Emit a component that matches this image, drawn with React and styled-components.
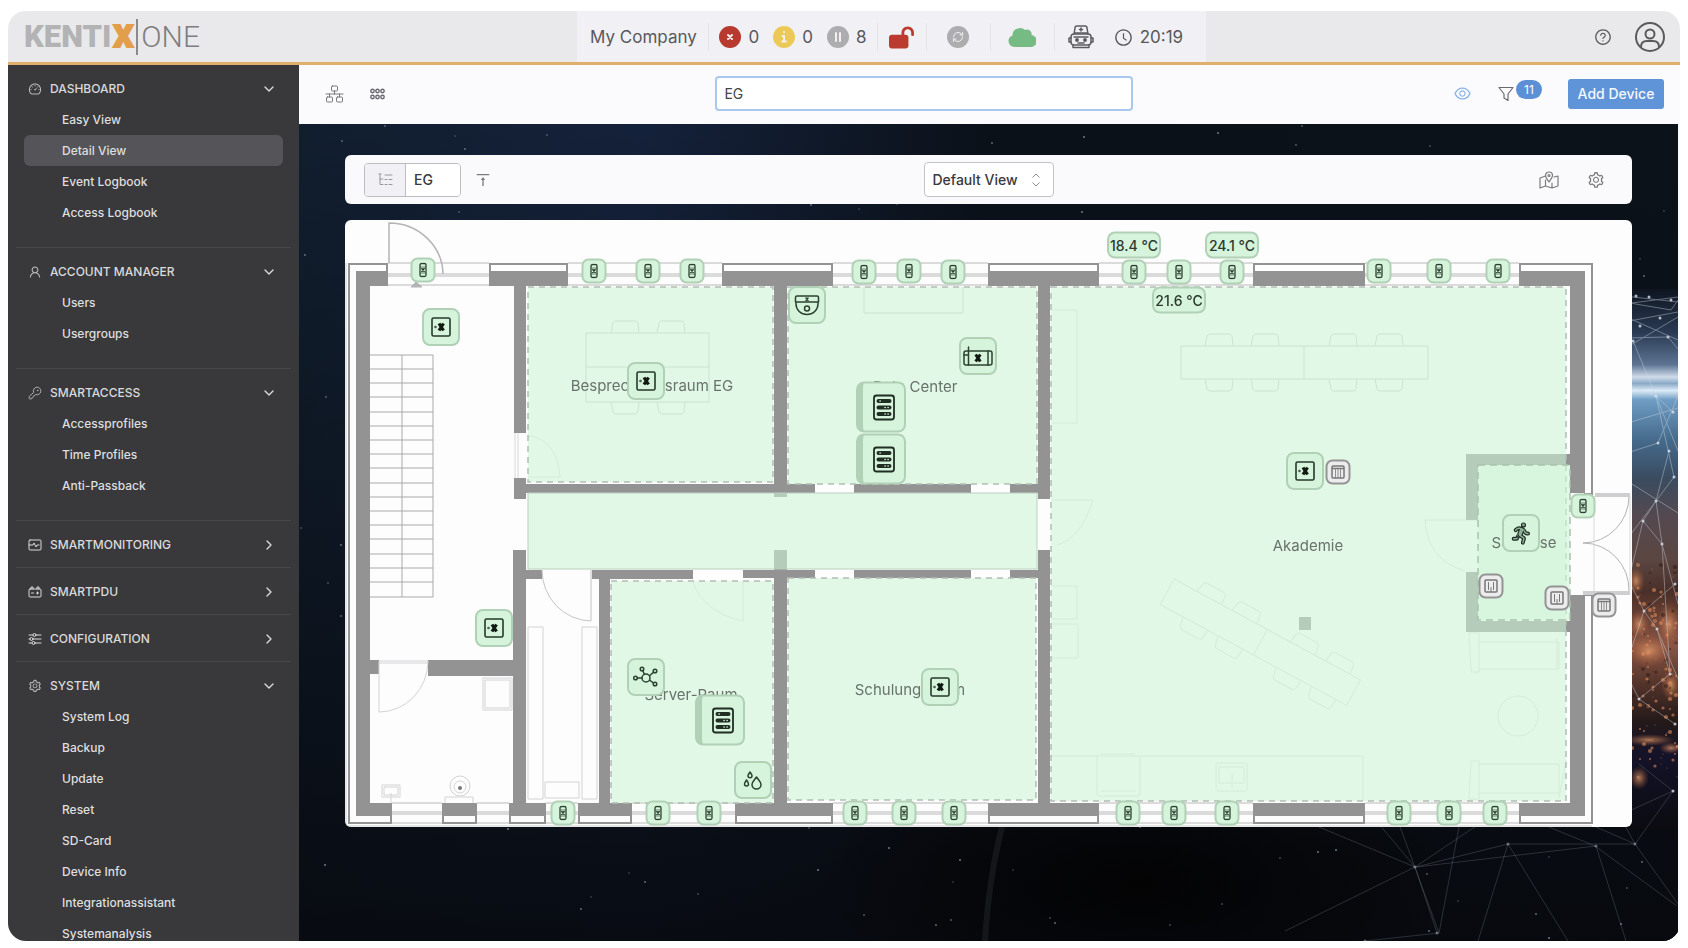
import { useState } from "react";
import styled, { createGlobalStyle } from "styled-components";
import {
   AiOutlineClockCircle,
   AiOutlineDashboard,
   AiOutlineEye,
   AiOutlineQuestionCircle,
   AiOutlineSetting,
   AiOutlineUser,
   AiOutlineVerticalAlignTop,
} from "react-icons/ai";
import { FaLockOpen, FaPersonRunning } from "react-icons/fa6";
import { ChevronDown, ChevronRight, KeyRound, RefreshCw } from "lucide-react";

const planWidth = 1287;
const planHeight = 607;
const wall = "#939393";

const GlobalStyle = createGlobalStyle`
   *{ box-sizing: border-box; }
   body{
      margin:           0;
      background:       #ffffff;
      font-family:      Inter, "Liberation Sans", sans-serif;
   }
   button, input, select{ font-family: inherit; }
`

const Window = styled.div`
   display:          flex;
   flex-direction:   column;
   height:           calc(100vh - 18px);
   margin:           11px 8px 7px;
   border-radius:    18px;
   overflow:         hidden;
   background:       #fbfbfd;
`

/* ---------- header ---------- */

const Header = styled.header`
   display:          grid;
   grid-template-columns: 6fr auto 5fr;
   flex:             none;
   height:           54px;
   background:       #e9e9eb;
   border-bottom:    3px solid #e0b06a;
`
const Logo = styled.a`
   display:          flex;
   align-items:      center;
   align-self:       center;
   height:           36px;
   padding-left:     16px;
   font-family:      Roboto, "Liberation Sans", sans-serif;
   font-size:        31px;
   font-weight:      900;
   line-height:      36px;
   color:            #b3b3b4;
   text-decoration:  none;
`
const LogoX = styled.span`
   margin-left:      2px;
   color:            #e39e4c;
   -webkit-text-stroke: 2px #e39e4c;
`
const LogoOne = styled.span`
   margin-left:      3px;
   padding-left:     3px;
   border-left:      2px solid #8a8a8b;
   font-size:        30px;
   font-weight:      300;
   color:            #7e7e80;
`
const StatusBar = styled.div`
   display:          flex;
   align-items:      center;
   height:           51px;
   padding:          1px 10px 0 2px;
   background:       #f0f0f5;
   color:            #58585b;
   font-size:        17px;
`
const StatusGroup = styled.div`
   display:          flex;
   align-items:      center;
   justify-content:  center;
   gap:              ${({ $gap }) => $gap || 12}px;
   width:            ${({ $width }) => $width}px;
   height:           28px;
   border-right:     ${({ $last }) => ($last ? "none" : "1px solid #e2e2e8")};
`
const Counter = styled.span`
   display:          flex;
   align-items:      center;
   gap:              7px;
`
const HeaderActions = styled.div`
   display:          flex;
   align-items:      center;
   justify-content:  flex-end;
   gap:              22px;
   padding-right:    14px;
`
const IconButton = styled.button`
   display:          flex;
   align-items:      center;
   justify-content:  center;
   padding:          0;
   border:           none;
   background:       none;
   color:            ${({ $color }) => $color || "#7b7b7e"};
   cursor:           pointer;
`

/* ---------- sidebar ---------- */

const Body = styled.div`
   display:          flex;
   flex:             1;
   min-height:       0;
`
const Sidebar = styled.nav`
   flex:             none;
   width:            291px;
   overflow:         hidden;
   background:       #39393b;
`
const Section = styled.section`
   padding:          8px 0 ${({ $open }) => ($open ? 19 : 7)}px;
   margin:           0 8px;

   & + &{ border-top: 1px solid #48484b; }
`
const SectionHead = styled.button`
   display:          flex;
   align-items:      center;
   width:            100%;
   height:           31px;
   padding:          0 14px 0 12px;
   border:           none;
   background:       none;
   color:            #dadadb;
   font-size:        12px;
   font-weight:      500;
   cursor:           pointer;
`
const SectionTitle = styled.span`
   flex:             1;
   margin-left:      8px;
   text-align:       left;
`
const NavLink = styled.a`
   display:          block;
   height:           31px;
   margin:           0 8px;
   padding-left:     38px;
   border-radius:    6px;
   background:       ${({ $active }) => ($active ? "#555559" : "none")};
   color:            #dededf;
   font-size:        12px;
   font-weight:      500;
   line-height:      31px;
   text-decoration:  none;
`

/* ---------- main area ---------- */

const Main = styled.main`
   display:          flex;
   flex-direction:   column;
   flex:             1;
   min-width:        0;
`
const Toolbar = styled.div`
   display:          grid;
   grid-template-columns: 13fr 418px 17fr;
   align-items:      center;
   flex:             none;
   height:           59px;
   padding:          0 2px 2px 0;
   background:       #fbfbfe;
`
const ToolGroup = styled.div`
   display:          flex;
   align-items:      center;
   gap:              26px;
   padding-left:     26px;
`
const ToolActions = styled.div`
   display:          flex;
   align-items:      center;
   justify-content:  flex-end;
   padding-right:    14px;
`
const Search = styled.input`
   width:            100%;
   height:           35px;
   padding:          0 7px;
   border:           2px solid #a9c8ee;
   border-radius:    4px;
   outline:          none;
   background:       #ffffff;
   color:            #454548;
   font-size:        14px;
`
const FilterButton = styled(IconButton)`
   position:         relative;
   margin:           0 54px 0 26px;
`
const Badge = styled.span`
   position:         absolute;
   left:             18px;
   top:              -6px;
   width:            26px;
   border-radius:    10px;
   background:       #5b8fd6;
   color:            #ffffff;
   font-size:        12px;
   line-height:      19px;
`
const AddButton = styled.button`
   width:            96px;
   height:           30px;
   padding:          0;
   border:           none;
   border-radius:    3px;
   background:       #6094d8;
   color:            #f4f8fd;
   font-size:        14px;
   font-weight:      500;
   cursor:           pointer;
`
const Stage = styled.div`
   position:         relative;
   flex:             1;
   min-height:       0;
   margin-right:     2px;
   padding:          31px 46px;
   overflow:         hidden;
   background:       #0b1017;
`
const Sky = styled.svg`
   position:         absolute;
   inset:            0;
   width:            100%;
   height:           100%;
`
const PlanBar = styled.div`
   position:         relative;
   display:          grid;
   grid-template-columns: 1fr auto 1fr;
   align-items:      center;
   height:           49px;
   margin-bottom:    16px;
   padding:          0 19px;
   border-radius:    6px;
   background:       #fafafd;
`
const Crumb = styled.div`
   display:          flex;
   align-items:      center;
   gap:              13px;
`
const CrumbField = styled.div`
   display:          flex;
   width:            97px;
   height:           34px;
   border:           1px solid #bdbdc1;
   border-radius:    4px;
   overflow:         hidden;
   background:       #ffffff;
`
const CrumbIcon = styled.span`
   display:          flex;
   align-items:      center;
   justify-content:  center;
   flex:             none;
   width:            41px;
   border-right:     1px solid #bdbdc1;
   background:       #f1f1f5;
`
const CrumbInput = styled.input`
   width:            100%;
   min-width:        0;
   padding:          0 8px;
   border:           none;
   outline:          none;
   color:            #39393b;
   font-size:        14px;
   font-weight:      500;
`
const ViewField = styled.div`
   display:          flex;
   align-items:      center;
   position:         relative;
`
const ViewSelect = styled.select`
   width:            130px;
   height:           35px;
   padding:          0 8px;
   border:           1px solid #c3c3c7;
   border-radius:    4px;
   outline:          none;
   appearance:       none;
   background:       #ffffff;
   color:            #39393b;
   font-size:        14px;
   font-weight:      500;
`
const SelectArrows = styled.svg`
   position:         absolute;
   right:            13px;
   pointer-events:   none;
`
const PlanActions = styled.div`
   display:          flex;
   align-items:      center;
   justify-content:  flex-end;
   gap:              28px;
   padding-right:    8px;
`
const Plan = styled.div`
   position:         relative;
   border-radius:    6px;
   overflow:         hidden;
   background:       #fdfdfd;
`
const Drawing = styled.svg`
   display:          block;
   width:            100%;
   height:           auto;
`
const Pinned = styled.div`
   position:         absolute;
   left:             calc(${({ $x }) => $x} / ${planWidth} * 100%);
   top:              calc(${({ $y }) => $y} / ${planHeight} * 100%);
   transform:        translate(-50%, -50%);
`
const RoomName = styled(Pinned)`
   color:            #68726b;
   font-size:        15px;
   white-space:      nowrap;
`
const Device = styled(Pinned)`
   display:          flex;
   align-items:      center;
   justify-content:  center;
   width:            ${({ $w }) => $w}px;
   height:           ${({ $h }) => $h}px;
   padding:          0;
   border:           2px solid ${({ $idle }) => ($idle ? "#949496" : "#b0d1b6")};
   border-left-width: ${({ $rack }) => ($rack ? 7 : 2)}px;
   border-radius:    ${({ $w }) => ($w === 25 ? 7 : 8)}px;
   background:       ${({ $idle }) => ($idle ? "#ececed" : "#d6f3db")};
   color:            #2c3a30;
   font-size:        14px;
   font-weight:      500;
   white-space:      nowrap;
   cursor:           pointer;
`
const Runner = styled(FaPersonRunning)`
   fill:             #8fae96;
   stroke:           #1f2d23;
   stroke-width:     30;
   overflow:         visible;
`

/* ---------- icons ---------- */

const Stroke = ({ w, h = w, view, width = 1, color = "currentColor", children }) => (
   <svg width={w} height={h} viewBox={view || `0 0 ${w} ${h}`} fill="none" stroke={color}
      strokeWidth={width} strokeLinecap="round" strokeLinejoin="round" aria-hidden="true">
      {children}
   </svg>
);

const DeviceIcon = ({ kind }) => {
   if (kind === "contact") return (
      <Stroke w={11} h={15} width={1.3} color="#2b4231">
         <rect x="2.500" y="1" width="6" height="13" rx="1.500" />
         <path d="M3 4.500h5M3 10.500h5" strokeWidth=".6" />
         <path d="M4.300 6l2.400 3M6.700 6l-2.400 3" strokeWidth="1.500" />
      </Stroke>
   );
   if (kind === "sensor") return (
      <Stroke w={22} width={1.6} color="#26382b">
         <rect x="2" y="2" width="18" height="18" rx="1.500" />
         <path d="M9 7.500l4.500 7M13.500 7.500l-4.500 7" strokeWidth="3.200" strokeLinecap="butt" stroke="#101a13" />
         <circle cx="5.500" cy="11" r=".4" />
      </Stroke>
   );
   if (kind === "dome") return (
      <Stroke w={26} width={1.5} color="#2b4231">
         <path d="M1.500 5.500q0-1.500 1.500-1.500h20q1.500 0 1.500 1.500v4.500h-23zM2 10v2a11 10.500 0 0 0 22 0v-2" />
         <circle cx="13" cy="16.500" r="2.500" />
         <path d="M12 6l2 2.500M14 6l-2 2.500" />
      </Stroke>
   );
   if (kind === "gateway") return (
      <Stroke w={30} h={22} width={1.5} color="#2b4231">
         <rect x="1" y="6" width="28" height="14" rx="2" />
         <path d="M5.500 2v18M25 6v14M1 10h4" />
         <path d="M12.700 9.500l4.600 7M17.300 9.500l-4.600 7" strokeWidth="3" strokeLinecap="butt" stroke="#101a13" />
      </Stroke>
   );
   if (kind === "rack") return (
      <Stroke w={24} h={28} width={1.8} color="#1f2d23">
         <rect x="2" y="2" width="20" height="24" rx="2.500" />
         <path d="M6.500 7.500h11M6.500 14h11M6.500 20.500h11" strokeWidth="4" />
         <path d="M8 7.500h.2M13 14h.2M16 14h.2M13 20.500h.2M16 20.500h.2" stroke="#d6f3db" strokeWidth="1.500" />
      </Stroke>
   );
   if (kind === "network") return (
      <Stroke w={26} h={22} width={1.5} color="#2b4231">
         <circle cx="13" cy="12" r="4" />
         <circle cx="2.500" cy="12" r="1.800" />
         <circle cx="9" cy="3" r="1.800" />
         <circle cx="22" cy="5" r="1.800" />
         <circle cx="22" cy="18" r="1.800" />
         <path d="M4.300 12h4.700M9.800 4.700l1.600 3.600M16.500 9.800l4-3.600M16.500 14.200l4 2.800" />
      </Stroke>
   );
   if (kind === "water") return (
      <Stroke w={20} h={20} width={1.5} color="#2b4231">
         <path d="M13.500 7c2 3 4.500 5 4.500 7.500a4.500 4.500 0 0 1-9 0c0-2.500 2.500-4.500 4.500-7.500z" />
         <path d="M7 2c1 1.500 2 2.500 2 3.800a2 2 0 0 1-4 0c0-1.300 1-2.300 2-3.800zM3.500 10c1 1.500 2 2.700 2 4a2 2 0 0 1-4 0c0-1.300 1-2.500 2-4z" />
      </Stroke>
   );
   if (kind === "door") return (
      <Stroke w={15} width={1.5} color="#77777a">
         <rect x="1.500" y="1.500" width="12" height="12" rx="1" />
         <path d="M5 4v7M10 4v7M7.500 9v4" strokeWidth="1" />
      </Stroke>
   );
   if (kind === "slats") return (
      <Stroke w={15} width={1.5} color="#77777a">
         <rect x="1.500" y="1.500" width="12" height="12" rx="1" />
         <path d="M2 4h11" />
         <path d="M5 5v8M7.500 5v8M10 5v8" strokeWidth=".8" />
      </Stroke>
   );
   return <Runner size={21} />;
};

const MonitorIcon = () => (
   <Stroke w={14} h={12}>
      <rect x="1" y="1" width="12" height="10" rx="1" />
      <path d="M1 6h4l1-2 2 4 1-2h2" />
   </Stroke>
);
const PduIcon = () => (
   <Stroke w={14} h={12}>
      <rect x="1" y="3" width="12" height="8" rx="1" />
      <path d="M3 3V1h2v2M9 3V1h2v2M3.500 7h2M8.500 7h2M9.500 6v2" />
   </Stroke>
);
const SlidersIcon = () => (
   <Stroke w={14} h={14}>
      <path d="M1 3h4M8 3h5M1 7h1M5 7h8M1 11h3M7 11h6" />
      <circle cx="6.500" cy="3" r="1.500" />
      <circle cx="3.500" cy="7" r="1.500" />
      <circle cx="5.500" cy="11" r="1.500" />
   </Stroke>
);

/* ---------- data ---------- */

const sections = [
   { title: "DASHBOARD", Icon: AiOutlineDashboard, items: ["Easy View", "Detail View", "Event Logbook", "Access Logbook"] },
   { title: "ACCOUNT MANAGER", Icon: AiOutlineUser, items: ["Users", "Usergroups"] },
   { title: "SMARTACCESS", Icon: KeyRound, items: ["Accessprofiles", "Time Profiles", "Anti-Passback"] },
   { title: "SMARTMONITORING", Icon: MonitorIcon, items: [] },
   { title: "SMARTPDU", Icon: PduIcon, items: [] },
   { title: "CONFIGURATION", Icon: SlidersIcon, items: [] },
   {
      title: "SYSTEM", Icon: AiOutlineSetting,
      items: ["System Log", "Backup", "Update", "Reset", "SD-Card", "Device Info", "Integrationassistant", "Systemanalysis"],
   },
];

const roomNames = [
   ["Besprechungsraum EG", 307, 165],
   ["Data Center", 570, 166],
   ["Akademie", 963, 325],
   ["Schleuse", 1179, 322],
   ["Server-Raum", 346, 474],
   ["Schulungsraum", 565, 469],
];

const contacts = [
   [78, 50], [249, 51], [303, 51], [347, 51], [519, 52], [564, 51], [608, 52],
   [789, 52], [834, 52], [887, 52], [1034, 51], [1094, 51], [1153, 51], [1238, 286],
   [218, 593], [313, 593], [364, 593], [510, 593], [559, 593], [609, 593],
   [783, 593], [829, 593], [882, 593], [1054, 593], [1104, 593], [1150, 593],
];

const devices = [
   ["sensor", 96, 107], ["sensor", 301, 161], ["dome", 462, 85], ["gateway", 633, 136],
   ["sensor", 960, 251], ["runner", 1176, 313], ["sensor", 149, 408], ["network", 301, 457],
   ["water", 408, 560], ["sensor", 595, 467],
];

const racks = [[536, 187], [536, 239], [375, 500]];

const idleDoors = [["slats", 993, 252], ["door", 1146, 366], ["door", 1212, 378], ["slats", 1259, 385]];

const temperatures = [["18.4 °C", 789, 25], ["24.1 °C", 887, 25], ["21.6 °C", 834, 80]];

// x ranges of the outer wall between windows
const topWall = [[144, 223], [377, 488], [643, 754], [908, 1020]];
const bottomWall = [[97, 132], [164, 201], [233, 287], [390, 488], [643, 754], [908, 1020]];
const topWindows = [[43, 144], [223, 377], [488, 643], [754, 908], [1020, 1174]];
const bottomWindows = [[47, 97], [132, 164], [201, 233], [287, 390], [488, 643], [754, 908], [1020, 1174]];

// x, y, width, height
const innerWalls = [
   [169, 66, 12, 147], [169, 258, 12, 21], [168, 330, 13, 253],
   [181, 264, 289, 9], [509, 264, 117, 9], [665, 264, 28, 9],
   [429, 66, 13, 211], [693, 66, 12, 213], [693, 330, 12, 253],
   [181, 350, 16, 9], [247, 350, 101, 9], [398, 350, 72, 8], [509, 350, 117, 8], [665, 350, 28, 8],
   [254, 350, 11, 233], [429, 330, 13, 253],
   [25, 440, 9, 14], [83, 440, 85, 16],
   [1121, 234, 104, 11], [1121, 245, 12, 55], [1121, 352, 12, 49], [1121, 401, 104, 11],
   [954, 397, 12, 13],
];

const rooms = [
   [183, 67, 245, 195], [443, 67, 249, 197], [706, 67, 515, 514], [266, 361, 162, 222], [443, 358, 248, 222],
];

const Chairs = ({ xs, top, bottom }) => xs.map((x) => (
   <g key={x}>
      <path d={`M${x} ${top}l2-10q1-2 3-2h19q2 0 3 2l1 10`} />
      <path d={`M${x} ${bottom}l2 10q1 2 3 2h19q2 0 3-2l1-10`} />
   </g>
));

const stars = Array.from({ length: 230 }, (_, i) => ({
   x: (i * 311 + ((i * i * 17) % 97)) % 1379,
   y: (i * 197 + ((i * i * 29) % 113)) % 817,
   o: 0.25 + (i % 5) * 0.1,
}));

const cityLights = Array.from({ length: 150 }, (_, i) => ({
   x: 1333 + ((i * 31 + ((i * i * 7) % 23)) % 46),
   y: 440 + ((i * 47 + ((i * i * 13) % 61)) % 215),
   r: 0.6 + (i % 4) * 0.5,
}));

const meshPoints = [
   [1337, 172], [1350, 173], [1372, 176], [1341, 202], [1361, 194], [1369, 213], [1334, 217], [1357, 272],
   [1374, 288], [1359, 319], [1370, 327], [1375, 353], [1357, 377], [1344, 397], [1363, 420], [1376, 460],
   [1345, 487], [1358, 505], [1371, 550], [1340, 575], [1376, 600], [1374, 667], [1336, 720], [1297, 722],
   [1209, 720], [1116, 743], [1138, 809], [1066, 817],
];

const Background = () => (
   <Sky viewBox="0 0 1379 817" preserveAspectRatio="xMaxYMin slice" aria-hidden="true">
      <defs>
         <linearGradient id="night" x1="0" y1="0" x2="1" y2="0">
            <stop offset="0" stopColor="#111e2e" />
            <stop offset=".25" stopColor="#14213a" />
            <stop offset=".5" stopColor="#0b1119" />
            <stop offset="1" stopColor="#0c121a" />
         </linearGradient>
         <linearGradient id="fade" x1="0" y1="0" x2="0" y2="1">
            <stop offset="0" stopColor="#080d14" stopOpacity="0" />
            <stop offset="1" stopColor="#07090e" stopOpacity=".9" />
         </linearGradient>
         <linearGradient id="earth" x1="0" y1="0" x2="0" y2="1">
            <stop offset="0" stopColor="#0e1520" />
            <stop offset=".08" stopColor="#2a3a52" />
            <stop offset=".14" stopColor="#5c7492" />
            <stop offset=".163" stopColor="#d0dcea" />
            <stop offset=".175" stopColor="#8ba9c6" />
            <stop offset=".188" stopColor="#dcebf7" />
            <stop offset=".205" stopColor="#6f9dc4" />
            <stop offset=".28" stopColor="#456a8b" />
            <stop offset=".35" stopColor="#3a4c60" />
            <stop offset=".42" stopColor="#54494f" />
            <stop offset=".5" stopColor="#5b4642" />
            <stop offset=".56" stopColor="#4a2f28" />
            <stop offset=".66" stopColor="#8a5544" />
            <stop offset=".74" stopColor="#4d3028" />
            <stop offset=".8" stopColor="#241a1a" />
            <stop offset=".86" stopColor="#14132a" />
            <stop offset="1" stopColor="#0b0b10" />
         </linearGradient>
         <radialGradient id="city">
            <stop offset="0" stopColor="#f2a873" stopOpacity=".7" />
            <stop offset="1" stopColor="#b45f38" stopOpacity="0" />
         </radialGradient>
         <radialGradient id="shade">
            <stop offset="0" stopColor="#030304" />
            <stop offset="1" stopColor="#030304" stopOpacity="0" />
         </radialGradient>
      </defs>
      <rect width="1379" height="817" fill="url(#night)" />
      <rect width="1379" height="817" fill="url(#fade)" />
      <ellipse cx="840" cy="760" rx="320" ry="130" fill="url(#shade)" />
      {stars.map(({ x, y, o }, i) => <circle key={i} cx={x} cy={y} r="1" fill="#9fb6d0" opacity={o} />)}
      <rect x="1325" y="165" width="54" height="540" fill="url(#earth)" />
      {[[1337, 457, 9, 14], [1350, 527, 22, 16], [1370, 500, 12, 22], [1340, 500, 10, 14], [1372, 561, 10, 16], [1350, 616, 26, 6], [1372, 624, 12, 6], [1340, 654, 10, 12]].map(([x, y, rx, ry]) => (
         <ellipse key={y + x} cx={x} cy={y} rx={rx} ry={ry} fill="url(#city)" />
      ))}
      {cityLights.map(({ x, y, r }, i) => (
         <circle key={i} cx={x} cy={y} r={r} fill={i % 3 ? "#e08c5c" : "#2a1512"} opacity={i % 3 ? 0.6 : 0.5} />
      ))}
      <path d="M703 703q-13 50-17 114" stroke="#1d2127" strokeWidth="6" fill="none" opacity=".6" />
      <g stroke="#cfdbe8" strokeWidth="1" opacity=".42" fill="none">
         <path d="M1325 172l54 6M1325 180l54-7M1325 198l54-10M1325 192l54 24M1325 225l54-32M1325 214l44-1 10 12M1325 178l47 8 7-10" />
         <path d="M1325 260l32 12 22 55M1325 300l54-16M1325 330l34-11 20-47M1325 355l54 34M1370 327l-13 50-32 42M1357 272l18 81-18 24M1334 217l23 55 17 16" />
         <path d="M1357 377l-13 20-19 78M1357 377l6 43 16 60M1344 397l19 23 8 130M1345 487l-20-40M1345 487l13 18 21 50M1345 487l31-27M1345 487l-20 60M1358 505l13 45-31 25-15-30M1340 575l36 25" />
      </g>
      <g stroke="#8a93a0" strokeWidth="1" opacity=".28" fill="none">
         <path d="M1340 640l34 27-38 53M1374 667l-79 36M1336 720l-11-20M1336 720l-39-17M1297 722l-180 21M1209 720l-92 23M1209 720l127 0M1080 700l36 43-130 64M1020 703l96 40M1100 700l40 109-74 8M1138 809l-22-66M1180 700l-64 43M1160 703l-20 106M1336 720l43 60M1209 720l-30 97M1209 720l60 97M1297 722l30 95M1250 703l46 19 82 60" />
      </g>
      {meshPoints.map(([x, y], i) => <circle key={i} cx={x} cy={y} r="1.500" fill="#dbe4ee" opacity={y > 700 ? 0.4 : 0.8} />)}
   </Sky>
);

const FloorPlan = () => (
   <Drawing viewBox={`0 0 ${planWidth} ${planHeight}`} role="img" aria-label="Floor plan EG">
      {/* outer shell */}
      <g fill="none" stroke="#b9b9bb">
         {topWindows.map(([a, b]) => (
            <path key={a} d={`M${a} 43H${b}M${a} 54H${b}M${a} 56H${b}M${a} 65H${b}`} strokeWidth="1" />
         ))}
         {bottomWindows.map(([a, b]) => (
            <path key={a} d={`M${a} 583H${b}M${a} 592H${b}M${a} 594H${b}M${a} 603H${b}`} strokeWidth="1" />
         ))}
         <path d="M1 43V604q0 2 2 2H1247" stroke="#cfcfd1" />
      </g>
      <g fill={wall}>
         <path d="M11 51H43V66H25V583H47V596H11z" />
         <path d="M1174 51H1240V273H1225V66H1174z" />
         <path d="M1225 375H1240V596H1174V583H1225z" />
         {topWall.map(([a, b]) => <rect key={a} x={a} y="51" width={b - a} height="15" />)}
         {bottomWall.map(([a, b]) => <rect key={a} x={a} y="583" width={b - a} height="13" />)}
         {innerWalls.map(([x, y, w, h]) => <rect key={`${x}-${y}`} x={x} y={y} width={w} height={h} />)}
      </g>
      <g fill="none" stroke={wall} strokeWidth="2">
         <path d="M42 52V44H4V603H46V595" />
         <path d="M1175 52V44H1247V274H1239M1239 375H1247V603H1175V595" />
         {topWall.map(([a, b]) => <path key={a} d={`M${a + 1} 52V44H${b - 1}V52`} />)}
         {bottomWall.map(([a, b]) => <path key={a} d={`M${a + 1} 595V603H${b - 1}V595`} />)}
      </g>

      {/* doors and fixtures */}
      <g fill="none" stroke="#b4b4b6">
         <path d="M44 43V3A54 52 0 0 1 98 54" strokeWidth="1.500" />
         <path d="M66 67l5-5 6 5z" fill="#b4b4b6" />
         <path d="M1284 276A46 47 0 0 1 1238 323A46 47 0 0 1 1284 371" />
         <path d="M1285 276V371M1249 276V372" stroke="#d8d8da" />
         <path d="M1250 275H1285M1238 373H1285" stroke="#cfcfd1" strokeWidth="4" />
         <path d="M170 213V258M173 213V258" stroke="#d8d8da" />
      </g>
      <g fill="none" stroke="#a9a9ab">
         <path d="M25 135H88V377H25M57 135V377" />
         {Array.from({ length: 16 }, (_, i) => (
            <path key={i} d={`M25 ${Math.round(149 + i * 14.2)}H88`} />
         ))}
      </g>
      <g fill="none" stroke="#d3d3d6">
         <path d="M34 441H83A49 51 0 0 1 34 492V441M34 443H83" />
         <path d="M138 458H167V490H138zM140 460H165V488H140z" />
         <path d="M37 565H55V577H37zM39 567H53V575H39zM46 573V583" />
         <circle cx="115" cy="566" r="10" />
         <circle cx="115" cy="567" r="6" />
         <circle cx="115" cy="568" r="2" fill="#77777a" stroke="none" />
         <path d="M100 583V577H128V583" />
         <path d="M197 350A50 51 0 0 0 246 401V350" stroke="#c4c4c7" />
         <path d="M183 407H198V579H183zM237 407H252V579H237zM200 562H234V578H200z" />
      </g>

      {/* furniture below the tinted rooms */}
      <g fill="none" stroke="#a6a6a9" strokeWidth="1" opacity=".6">
         <path d="M241 113H364V182H241zM241 147H364M519 67V93H618V67" />
         <path d="M183 216A32 42 0 0 1 215 257H183" opacity=".6" />
         <Chairs xs={[266, 312]} top={113} bottom={182} />
         <path d="M836 126H1083V159H836zM959 126V159" />
         <Chairs xs={[860, 906, 984, 1030]} top={126} bottom={159} />
         <g opacity=".6">
            <path d="M707 90H732V203H707M707 280H748Q736 318 712 325M707 366H732V399H707M707 404H733V438H707" />
            <path d="M348 362Q358 392 398 401V362" />
            <path d="M1133 300H1080Q1082 340 1120 351" />
            <path d="M706 536H1018V581M752 536V574q0 2 2 2H793q2 0 2-2V536M756 534H790M756 571H791" />
            <rect x="871" y="543" width="31" height="28" rx="2" />
            <rect x="874" y="547" width="25" height="16" />
            <path d="M887 553V568" />
            <path d="M1124 413H1134V452H1126zM1134 422H1214V449H1134M1212 418V449M1126 541H1134V579H1124zM1134 544H1214V573H1134M1221 540L1214 578" />
            <circle cx="1173" cy="496" r="20" />
            <g transform="translate(829 359) rotate(28.400)">
               <path d="M0 0H212V29H0zM106 0V29" />
               <Chairs xs={[26, 66, 132, 172]} top={0} bottom={29} />
            </g>
         </g>
      </g>

      {/* monitored rooms */}
      <g fill="#cff4d6" fillOpacity=".58">
         <rect x="183" y="273" width="509" height="76" stroke="#b9cfbd" />
         {rooms.map(([x, y, w, h]) => (
            <rect key={x + y} x={x} y={y} width={w} height={h} stroke="#b2bdb4" strokeWidth="1.500" strokeDasharray="6 5" />
         ))}
         <rect x="1133" y="245" width="92" height="155" stroke="#a9c2ad" strokeWidth="1.500" strokeDasharray="7 5" />
      </g>
   </Drawing>
);

const Menu = () => {
   const [open, setOpen] = useState(() => sections.map((s) => s.items.length > 0));
   const toggle = (index) => setOpen(open.map((value, i) => (i === index ? !value : value)));

   return (
      <Sidebar>
         {sections.map(({ title, Icon, items }, i) => (
            <Section key={title} $open={open[i]}>
               <SectionHead aria-expanded={open[i]} onClick={() => toggle(i)}>
                  <Icon size={14} strokeWidth={Icon === KeyRound ? 1.5 : undefined} color="#bcbcbe" />
                  <SectionTitle>{title}</SectionTitle>
                  {open[i] ? <ChevronDown size={16} /> : <ChevronRight size={16} />}
               </SectionHead>
               {open[i] && items.map((item) => (
                  <NavLink key={item} href="#" $active={item === "Detail View"}>{item}</NavLink>
               ))}
            </Section>
         ))}
      </Sidebar>
   );
}

const Disc = ({ color, children }) => (
   <svg width="22" height="22" viewBox="0 0 22 22" fill="none" stroke="#f5f0ee" strokeWidth="2" strokeLinecap="round">
      <circle cx="11" cy="11" r="11" fill={color} stroke="none" />
      {children}
   </svg>
);

const TopBar = () => (
   <Header>
      <Logo href="#" aria-label="KentixONE">
         KENTI<LogoX>X</LogoX><LogoOne>ONE</LogoOne>
      </Logo>
      <StatusBar>
         <StatusGroup $width={130}>My Company</StatusGroup>
         <StatusGroup $width={169} $gap={14}>
            <Counter><Disc color="#b83a2e"><path d="M9 9l4 4M13 9l-4 4" /></Disc>0</Counter>
            <Counter><Disc color="#ecc956"><path d="M11 6h.1M9.500 10h1.500v5M9 15.500h4" /></Disc>0</Counter>
            <Counter><Disc color="#adadaf"><path d="M9 7v8M13 7v8" /></Disc>8</Counter>
         </StatusGroup>
         <StatusGroup $width={49}><FaLockOpen size={25} color="#bb3b30" /></StatusGroup>
         <StatusGroup $width={64}>
            <Disc color="#adadaf">
               <g transform="translate(5 5)"><RefreshCw size={12} color="#f1f1f3" /></g>
            </Disc>
         </StatusGroup>
         <StatusGroup $width={64}>
            <svg width="28" height="20" viewBox="0 0 28 20" fill="#77bb84" aria-label="Cloud connected">
               <path d="M6.500 20A6.500 6 0 0 1 4.500 8.500 7 7 0 0 1 10 1.500 6.500 6.500 0 0 1 17 3a4.500 4.500 0 0 1 6.500 5A6 6 0 0 1 22 20z" />
            </svg>
         </StatusGroup>
         <StatusGroup $width={141} $gap={20} $last>
            <Stroke w={26} h={24} width={1.5} color="#5c5c60">
               <path d="M6 9l1-6q0-2 2-2h8q2 0 2 2l1 6M13 3v3M11.500 4.500h3M7 8h12" />
               <rect x="3" y="9" width="20" height="11" rx="3" />
               <path d="M3 13H1v4h2M23 13h2v4h-2M5 20v2.500h16V20M6 12h14M10 18h6" />
               <circle cx="9" cy="15" r="1.200" fill="#5c5c60" />
               <circle cx="17" cy="15" r="1.200" fill="#5c5c60" />
            </Stroke>
            <Counter><AiOutlineClockCircle size={19} />20:19</Counter>
         </StatusGroup>
      </StatusBar>
      <HeaderActions>
         <IconButton aria-label="Help" $color="#5a5a5d"><AiOutlineQuestionCircle size={18} /></IconButton>
         <IconButton aria-label="Account" $color="#5a5a5d">
            <Stroke w={32} width={2}>
               <circle cx="16" cy="16" r="14" />
               <circle cx="16" cy="13" r="4.500" />
               <path d="M7 26q0-6 6-6h6q6 0 6 6" />
            </Stroke>
         </IconButton>
      </HeaderActions>
   </Header>
);

export default function App() {
   const [search, setSearch] = useState("EG");
   const [level, setLevel] = useState("EG");

   return (
      <Window>
         <GlobalStyle />
         <TopBar />
         <Body>
            <Menu />
            <Main>
               <Toolbar>
                  <ToolGroup>
                     <IconButton aria-label="Tree view">
                        <Stroke w={19} h={18}>
                           <rect x="6.500" y="1" width="6" height="5" rx="1" />
                           <rect x="1.500" y="12" width="6" height="5" rx="1" />
                           <rect x="11.500" y="12" width="6" height="5" rx="1" />
                           <path d="M9.500 6v3M1 9h17M4.500 9v3M14.500 9v3" />
                        </Stroke>
                     </IconButton>
                     <IconButton aria-label="Tile view" $color="#6a6a6e">
                        <Stroke w={15} h={12} width={1.4}>
                           {[2.5, 7.5, 12.5].map((x) => (
                              <g key={x}><circle cx={x} cy="3" r="1.700" /><circle cx={x} cy="9" r="1.700" /></g>
                           ))}
                        </Stroke>
                     </IconButton>
                  </ToolGroup>
                  <Search aria-label="Search" value={search} onChange={(e) => setSearch(e.target.value)} />
                  <ToolActions>
                     <IconButton aria-label="Visibility" $color="#8bb4e6"><AiOutlineEye size={19} /></IconButton>
                     <FilterButton aria-label="Filter" $color="#6a6a6e">
                        <Stroke w={16} h={16} width={1.2}><path d="M1 1.500h14L10 8v6.500L6 12V8z" /></Stroke>
                        <Badge>11</Badge>
                     </FilterButton>
                     <AddButton>Add Device</AddButton>
                  </ToolActions>
               </Toolbar>
               <Stage>
                  <Background />
                  <PlanBar>
                     <Crumb>
                        <CrumbField>
                           <CrumbIcon>
                              <Stroke w={15} h={13} color="#98989c">
                                 <path d="M2 1v10.500h3M2 6h3M1 1h2M7 2h7M7 6.500h2M11 6.500h3M7 11.500h2M11 11.500h3" />
                              </Stroke>
                           </CrumbIcon>
                           <CrumbInput aria-label="Level" value={level} onChange={(e) => setLevel(e.target.value)} />
                        </CrumbField>
                        <IconButton aria-label="Level up"><AiOutlineVerticalAlignTop size={18} /></IconButton>
                     </Crumb>
                     <ViewField>
                        <ViewSelect aria-label="View" defaultValue="Default View">
                           <option>Default View</option>
                        </ViewSelect>
                        <SelectArrows width="10" height="16" viewBox="0 0 10 16" fill="none" stroke="#8d8d91">
                           <path d="M1.500 5.500L5 2l3.500 3.500M1.500 10.500L5 14l3.500-3.500" />
                        </SelectArrows>
                     </ViewField>
                     <PlanActions>
                        <IconButton aria-label="Show map">
                           <Stroke w={20} h={18} width={1.2}>
                              <path d="M6.500 5L1 7v10l5.500-2 6.500 2 6-2V5l-4 1M6.500 9v6M13 12v5" />
                              <path d="M10 11c-2-3-3.500-4.500-3.500-6.500a3.500 3.500 0 0 1 7 0c0 2-1.500 3.500-3.500 6.500z" />
                              <circle cx="10" cy="4.500" r="1" />
                           </Stroke>
                        </IconButton>
                        <IconButton aria-label="Plan settings"><AiOutlineSetting size={18} /></IconButton>
                     </PlanActions>
                  </PlanBar>
                  <Plan>
                     <FloorPlan />
                     {roomNames.map(([name, x, y]) => <RoomName key={name} $x={x} $y={y}>{name}</RoomName>)}
                     {contacts.map(([x, y]) => (
                        <Device as="button" key={`${x}-${y}`} aria-label="Contact" $x={x} $y={y} $w={25} $h={25}>
                           <DeviceIcon kind="contact" />
                        </Device>
                     ))}
                     {temperatures.map(([value, x, y]) => (
                        <Device as="button" key={value} $x={x} $y={y} $w={54} $h={27}>{value}</Device>
                     ))}
                     {racks.map(([x, y]) => (
                        <Device as="button" key={`${x}-${y}`} aria-label="Rack" $x={x} $y={y} $w={50} $h={51} $rack>
                           <DeviceIcon kind="rack" />
                        </Device>
                     ))}
                     {devices.map(([kind, x, y]) => (
                        <Device as="button" key={`${x}-${y}`} aria-label={kind} $x={x} $y={y} $w={38} $h={38}>
                           <DeviceIcon kind={kind} />
                        </Device>
                     ))}
                     {idleDoors.map(([kind, x, y]) => (
                        <Device as="button" key={`${x}-${y}`} aria-label="Door" $x={x} $y={y} $w={25} $h={25} $idle>
                           <DeviceIcon kind={kind} />
                        </Device>
                     ))}
                  </Plan>
               </Stage>
            </Main>
         </Body>
      </Window>
   );
}
